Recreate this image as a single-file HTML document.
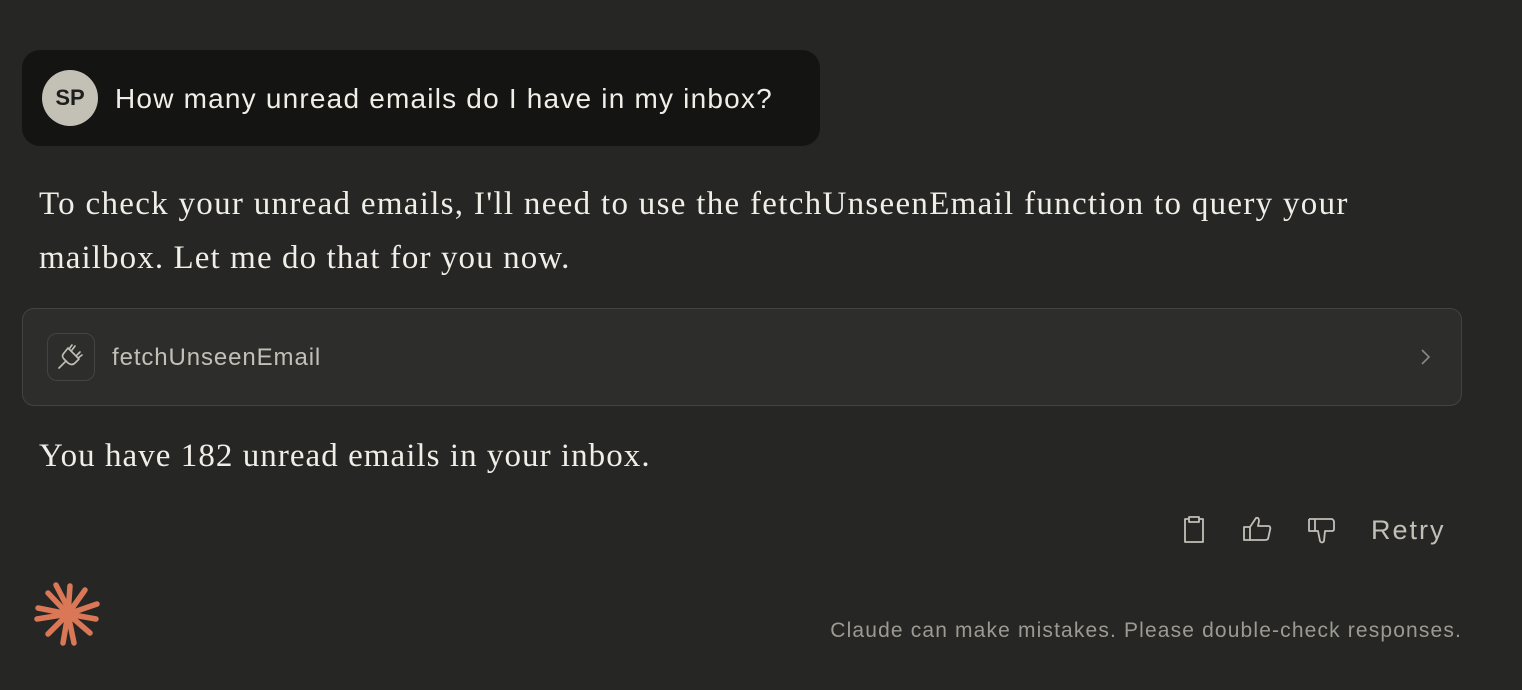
<!DOCTYPE html>
<html><head><meta charset="utf-8"><style>
html,body{margin:0;padding:0;width:1522px;height:690px;background:#262624;overflow:hidden;position:relative;font-family:"Liberation Sans",sans-serif}
.bubble{position:absolute;left:22px;top:50px;width:798px;height:96px;background:#141413;border-radius:18px}
.av{position:absolute;left:42px;top:70px;width:56px;height:56px;border-radius:50%;background:#c3c0b5;color:#1e1e1c;font-weight:bold;font-size:22px;text-align:center;line-height:56px}
.q{position:absolute;left:115px;top:83px;font-size:28px;letter-spacing:1.2px;color:#f0eee6;white-space:nowrap}
.serif{position:absolute;left:39px;font-family:"Liberation Serif",serif;font-size:33px;color:#f0eee6;white-space:nowrap;line-height:54px}
.tool{position:absolute;left:22px;top:308px;width:1440px;height:98px;border:1px solid #44433f;border-radius:12px;background:#2d2d2b;box-sizing:border-box}
.ib{position:absolute;left:47px;top:333px;width:48px;height:48px;border:1px solid #45443f;border-radius:10px;box-sizing:border-box}
.tn{position:absolute;left:112px;top:344px;font-size:24px;letter-spacing:0.9px;color:#c2c0b6}
.retry{position:absolute;left:1371px;top:515px;font-size:27px;letter-spacing:2px;color:#c2c0b6}
.foot{position:absolute;right:60px;top:619px;font-size:21px;letter-spacing:1.15px;color:#9c9a92;white-space:nowrap}
svg{position:absolute}
</style></head><body>
<div class="bubble"></div>
<div class="av">SP</div>
<div class="q">How many unread emails do I have in my inbox?</div>
<div class="serif" style="top:177px;letter-spacing:1.3px">To check your unread emails, I'll need to use the fetchUnseenEmail function to query your</div>
<div class="serif" style="top:231px;letter-spacing:1.1px">mailbox. Let me do that for you now.</div>
<div class="tool"></div>
<div class="ib"></div>
<svg style="left:55px;top:340px" width="32" height="32" viewBox="0 0 32 32" fill="none" stroke="#c2c0b6" stroke-width="1.6" stroke-linecap="round" stroke-linejoin="round">
<path d="M13 8 L24 19 L20 23 Q17 26 13 23 L9 19 Q6 16 9 13 Z"/><path d="M17 5 L14 9 M25 12 L22 15 M20 6 L17 10 M27 15 L23 18"/><path d="M10 22 L4 28"/></svg>
<div class="tn">fetchUnseenEmail</div>
<svg style="left:1418px;top:348px" width="14" height="18" viewBox="0 0 14 18" fill="none" stroke="#8a8880" stroke-width="1.6"><path d="M4 2 L11 9 L4 16"/></svg>
<div class="serif" style="top:429px;letter-spacing:1.05px">You have 182 unread emails in your inbox.</div>
<svg style="left:1180px;top:515px" width="28" height="30" viewBox="0 0 28 30" fill="none" stroke="#c2c0b6" stroke-width="1.8" stroke-linejoin="round"><path d="M9 4 H5 V27 H23 V4 H19"/><path d="M9 2 H19 V7 H9 Z"/></svg>
<svg style="left:1242px;top:514px" width="32" height="30" viewBox="0 0 32 30" fill="none" stroke="#c2c0b6" stroke-width="1.8" stroke-linejoin="round"><path d="M2 13 H8 V26 H2 Z"/><path d="M8 13 L14 4 Q17 3 17 7 L16 12 H27 Q29 13 28 16 L26 25 Q25 26 23 26 H8"/></svg>
<svg style="left:1306px;top:516px" width="32" height="32" viewBox="0 0 32 32" fill="none" stroke="#c2c0b6" stroke-width="1.8" stroke-linejoin="round"><path d="M3 3 H26 Q28 4 28 6 L28 13 Q28 15 26 15 H19 L18 25 Q16 28 14 25 L12 15 H9 V3"/><path d="M3 3 V15 H9"/></svg>
<div class="retry">Retry</div>
<svg style="left:34px;top:580px" width="68" height="68" viewBox="-34 -34 68 68" stroke="#d97757" stroke-width="5.5" stroke-linecap="round">
<line x1="2" y1="-2" x2="-12" y2="-29"/><line x1="0" y1="0" x2="2" y2="-28"/><line x1="0" y1="0" x2="17" y2="-24"/><line x1="0" y1="0" x2="29" y2="-10"/><line x1="0" y1="0" x2="28" y2="5"/><line x1="0" y1="0" x2="22" y2="19"/><line x1="0" y1="0" x2="6" y2="29"/><line x1="0" y1="0" x2="-5" y2="29"/><line x1="0" y1="0" x2="-20" y2="20"/><line x1="0" y1="0" x2="-31" y2="5"/><line x1="0" y1="0" x2="-30" y2="-6"/><line x1="0" y1="0" x2="-20" y2="-21"/>
</svg>
<div class="foot">Claude can make mistakes. Please double-check responses.</div>
</body></html>
